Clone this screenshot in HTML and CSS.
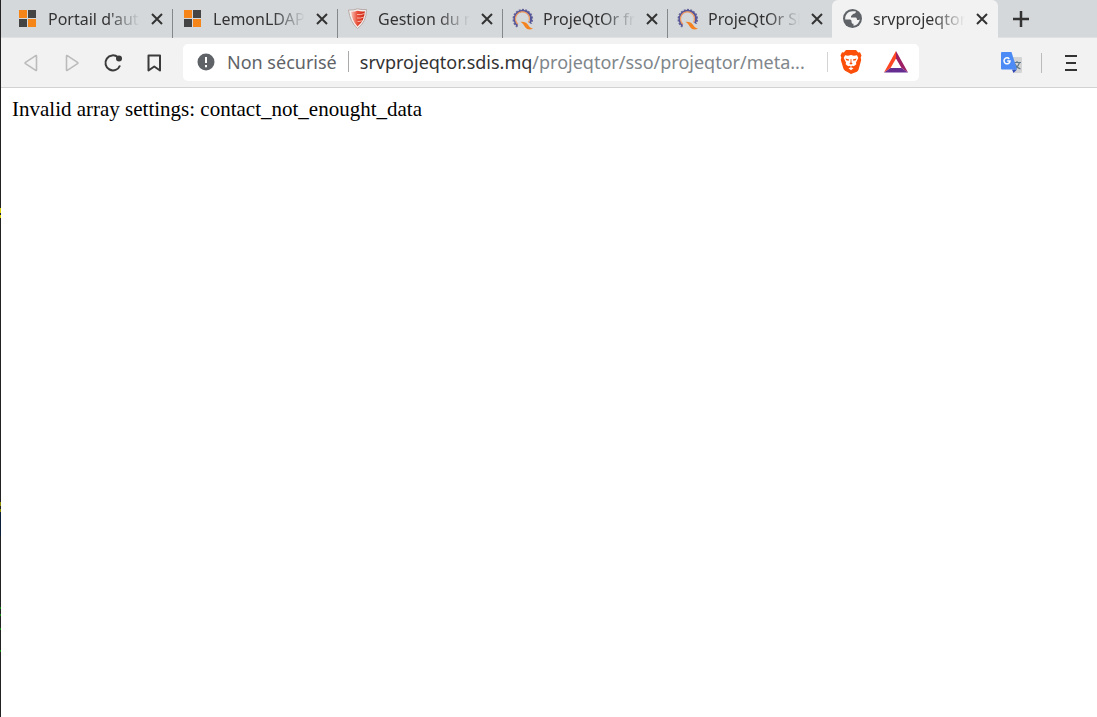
FILE: index.html
```
<!DOCTYPE html>
<html lang="fr">
<head>
    <meta charset="UTF-8">
    <meta name="viewport" content="width=device-width, initial-scale=1.0">
    <title>srvprojeqtor.sdis.mq</title>
    <link rel="stylesheet" href="styles.css">
</head>
<body>
    <!-- Shared icons -->
    <svg class="sprite" width="0" height="0" aria-hidden="true">
        <symbol id="lemon" viewBox="0 0 22 22">
            <path fill="#f58518" d="M2 2h8v8H2zM11 11h8v8h-8z" />
            <path fill="#444" d="M11 2h8v8h-8zM2 11h8v8H2z" />
        </symbol>
        <symbol id="gear-q" viewBox="0 0 22 22">
            <path d="M5.500 18.800A9.300 9.300 0 1 1 19 15.600" fill="none" stroke="#6a6a9c" stroke-width="2" stroke-dasharray="2 1.200" />
            <path d="M5.500 17.500A8.300 8.300 0 1 1 18 15.200" fill="none" stroke="#54549a" stroke-width="2" />
            <path d="M6 16.200A7 7 0 1 1 16.400 14.500" fill="none" stroke="#f09a60" stroke-width="1.200" />
            <path d="M8.500 13.800c3.500-.4 6 .7 7.500 3 1 1.800 2.500 3.200 5 4-3.500 1.200-6 .8-7.500-1.200-1.600-2.300-2.600-4.300-5-5.800z" fill="#f58220" />
        </symbol>
        <symbol id="close" viewBox="0 0 14 14">
            <path d="M2 2l10 10M12 2L2 12" stroke="#333" stroke-width="2" />
        </symbol>
    </svg>

    <div class="window">
        <nav class="tabs">
            <div class="tab">
                <svg class="favicon"><use href="#lemon" /></svg>
                <span class="title">Portail d'auth</span>
                <button class="close" aria-label="Fermer"><svg width="14" height="14"><use href="#close" /></svg></button>
            </div>
            <div class="tab">
                <svg class="favicon"><use href="#lemon" /></svg>
                <span class="title">LemonLDAP:</span>
                <button class="close" aria-label="Fermer"><svg width="14" height="14"><use href="#close" /></svg></button>
            </div>
            <div class="tab">
                <svg class="favicon" viewBox="0 0 22 22">
                    <defs>
                        <linearGradient id="shield-red">
                            <stop offset="0" stop-color="#f8c4b8" />
                            <stop offset=".45" stop-color="#e8503a" />
                            <stop offset="1" stop-color="#cc2010" />
                        </linearGradient>
                    </defs>
                    <path d="M1.500 2Q6 2.500 10.500.8 15 2 19.500 1.500 19.500 14 10.500 20.500 3 14 1.500 2z" fill="#f3f0ee" stroke="#b9aaa8" stroke-width="1" />
                    <path d="M4 3.800Q7.500 4 10.500 2.800 14 3.800 17.800 3.300 17.500 13 10.500 18.500 5 13 4 3.800z" fill="url(#shield-red)" />
                    <path d="M10 6.500q4 .6 7.500-1M10 10q3.500.6 7-1M10.500 13.500q2.500.3 5-1" fill="none" stroke="#f6b3a4" stroke-width="1" />
                </svg>
                <span class="title">Gestion du m</span>
                <button class="close" aria-label="Fermer"><svg width="14" height="14"><use href="#close" /></svg></button>
            </div>
            <div class="tab">
                <svg class="favicon"><use href="#gear-q" /></svg>
                <span class="title">ProjeQtOr fro</span>
                <button class="close" aria-label="Fermer"><svg width="14" height="14"><use href="#close" /></svg></button>
            </div>
            <div class="tab">
                <svg class="favicon"><use href="#gear-q" /></svg>
                <span class="title">ProjeQtOr SD</span>
                <button class="close" aria-label="Fermer"><svg width="14" height="14"><use href="#close" /></svg></button>
            </div>
            <div class="tab active">
                <svg class="favicon" viewBox="0 0 22 22">
                    <circle cx="10.500" cy="10.500" r="9.500" fill="#5f6368" />
                    <path d="M10.500 3.200h3.300c.2 1.600-.6 2.300-2 2.500-1.500.2-1.300 1.800-2.800 2v1.900h4.500c1.300 0 1.500 1.500 1.500 2.500h2.300l.5-1.500c.2 3.200-2.600 6.900-6.300 7.200v-2c-1.700 0-2-1.100-2-2.600 0-1.300-1.200-1.600-2.400-1.600H3.200v-1C3 6.800 6.200 3.200 10.500 3.200z" fill="#f2f2f2" />
                </svg>
                <span class="title">srvprojeqtor.</span>
                <button class="close" aria-label="Fermer"><svg width="14" height="14"><use href="#close" /></svg></button>
            </div>
            <button class="new-tab" aria-label="Nouvel onglet">
                <svg width="16" height="16" viewBox="0 0 16 16"><path d="M8 0v16M0 8h16" stroke="#333" stroke-width="2.500" /></svg>
            </button>
        </nav>

        <div class="toolbar">
            <div class="nav-buttons">
                <button aria-label="Retour" disabled>
                    <svg width="22" height="22" viewBox="0 0 22 22"><path d="M16.500 4v14q0 .8-.8.400L5.500 11.600q-.8-.6 0-1.200L15.700 3.600q.8-.4.800.4z" fill="none" stroke="#bbb" stroke-width="1.600" /></svg>
                </button>
                <button aria-label="Avancer" disabled>
                    <svg width="22" height="22" viewBox="0 0 22 22"><path d="M5.500 4v14q0 .8.800.400l10.200-6.800q.8-.6 0-1.200L6.300 3.600q-.8-.4-.8.400z" fill="none" stroke="#bbb" stroke-width="1.600" /></svg>
                </button>
                <button aria-label="Actualiser">
                    <svg width="22" height="22" viewBox="0 0 22 22">
                        <path d="M18 13.500A7.500 7.500 0 1 1 16 5.300" fill="none" stroke="#3b3b3b" stroke-width="2" />
                        <circle cx="17" cy="6.500" r="3" fill="#3b3b3b" />
                    </svg>
                </button>
                <button aria-label="Ajouter aux favoris">
                    <svg width="22" height="22" viewBox="0 0 22 22"><path d="M5.500 3.500h11.500V18.500L11.250 14.500 5.500 18.500z" fill="none" stroke="#3b3b3b" stroke-width="2" stroke-linejoin="round" /></svg>
                </button>
            </div>

            <div class="address">
                <svg class="info" width="18" height="18" viewBox="0 0 18 18">
                    <circle cx="9" cy="9" r="8.500" fill="#5f6368" />
                    <path d="M9 4v6M9 12v2.200" stroke="#fff" stroke-width="2" />
                </svg>
                <span class="security">Non sécurisé</span>
                <a class="url" href="#"><span class="host">srvprojeqtor.sdis.mq</span>/projeqtor/sso/projeqtor/meta...</a>
                <button class="shield" aria-label="Brave Shields">
                    <svg width="22" height="26" viewBox="0 0 22 26">
                        <path d="M6 1h10l2.200 2.500 1.800-.3 1.500 3.300-.8 2 .5 2.500-2.600 9.500q-.5 1.500-1.700 2.300L11 25l-5.900-3.200q-1.200-.8-1.700-2.300L.8 11l.5-2.500-.8-2L2 3.200l1.800.3z" fill="#fb4f0a" />
                        <path d="M5 6.200l3 .5L11 6l3 .7 3-.5 1.300 2.800-2.300 4.500.3 1.800-2.500 2-1.300-.6L11 17.800l-1.500-1.100-1.300.6-2.500-2 .3-1.800L3.700 9zM8.500 19.300l2.500-1.100 2.500 1.100-2.500 2z" fill="#fff" />
                        <path d="M5.500 9.600l3.700.8-.6 1.300-2.400-.5zM16.500 9.600l-3.700.8.6 1.300 2.400-.5zM10.600 10h.8l.1 3.500 1.200 1.200-1.700.9-1.700-.9 1.200-1.200z" fill="#fb4f0a" />
                    </svg>
                </button>
                <button class="rewards" aria-label="Brave Rewards">
                    <svg width="24" height="22" viewBox="0 0 24 22">
                        <path d="M12 0v7.500L6.500 17 0 21.500z" fill="#ff4724" />
                        <path d="M12 0l12 21.500-6.500-4.500L12 7.500z" fill="#9e1f63" />
                        <path d="M0 21.500L6.500 17h11l6.500 4.500z" fill="#662d91" />
                    </svg>
                </button>
            </div>

            <div class="actions">
                <button class="translate" aria-label="Google Traduction">
                    <svg width="22" height="22" viewBox="0 0 22 22">
                        <path d="M8 5h12q1 0 1 1v14q0 1-1 1h-7z" fill="#d4d4d4" />
                        <path d="M12 10.500h8M16 9v1.500M18.500 10.500q-1.500 5-5 6.500M13.500 11.500q2 4 6 5.500" fill="none" stroke="#607988" stroke-width="1.200" />
                        <path d="M11 17.500h5L12.500 21z" fill="#3049b5" />
                        <path d="M1 0h9.500L16 17.500H1q-1 0-1-1V1q0-1 1-1z" fill="#4c8bf5" />
                        <path d="M8.300 6.900A3 3 0 1 0 9 9H6.200" fill="none" stroke="#fff" stroke-width="1.500" />
                    </svg>
                </button>
                <button class="menu" aria-label="Menu">
                    <svg width="14" height="18" viewBox="0 0 14 18"><path d="M1 2h12M2 9h10M1 16h12" stroke="#333" stroke-width="2" /></svg>
                </button>
            </div>
        </div>

        <main class="page">Invalid array settings: contact_not_enought_data</main>
    </div>
</body>
</html>
```

FILE: styles.css
```
* {
    box-sizing: border-box;
}
body {
    margin: 0;
    padding-left: 1px;
    min-height: 100vh;
    /* sliver of the terminal behind the window */
    background: linear-gradient(#222 0 208px, #d8d000 208px 213px, #222 213px 215px, #d8d000 215px 218px, #222 218px 502px, #8c8c00 502px 506px, #222 506px 509px, #8c8c00 509px 512px, #0b2038 512px 536px, #222 536px 607px, #118a11 607px 609px, #222 609px 614px, #118a11 614px 616px, #222 616px 628px, #118a11 628px 630px, #222 630px 650px, #118a11 650px 652px, #222 652px);
    font-family: "Noto Sans", sans-serif;
}
.sprite {
    position: absolute;
}
.window {
    min-height: 100vh;
    background: #fff;
}
button {
    display: flex;
    align-items: center;
    justify-content: center;
    flex: none;
    margin: 0;
    padding: 0;
    border: 0;
    background: none;
}
svg {
    display: block;
    flex: none;
}

/* Tabs */
.tabs {
    display: flex;
    height: 38px;
    padding-left: 6px;
    background: #d4d8db;
    border-bottom: 1px solid #dfe2e4;
}
.tab {
    display: flex;
    align-items: center;
    flex: 0 1 165px;
    min-width: 0;
    height: 38px;
    padding: 0 8px 0 10px;
    background: linear-gradient(#85888a, #85888a) left bottom / 1px 29px no-repeat;
}
.tab:first-child {
    background: none;
}
.tab.active {
    flex-basis: 166px;
    padding-right: 9px;
    background: #f2f2f2;
    border-radius: 6px 6px 0 0;
}
.favicon {
    width: 22px;
    height: 22px;
}
.title {
    flex: 1;
    min-width: 0;
    margin: 0 10px 0 9px;
    overflow: hidden;
    white-space: nowrap;
    font-size: 16px;
    line-height: 24px;
    color: #333;
    -webkit-mask-image: linear-gradient(to right, #000 65%, transparent);
    mask-image: linear-gradient(to right, #000 65%, transparent);
}
.close {
    width: 14px;
    height: 24px;
}
.new-tab {
    width: 46px;
}

/* Toolbar */
.toolbar {
    display: flex;
    align-items: center;
    height: 50px;
    padding: 0 12px 0 15px;
    background: #f2f2f2;
    border-bottom: 1px solid #d2d2d2;
}
.nav-buttons {
    display: flex;
    gap: 11px;
    margin-right: 14px;
}
.nav-buttons button {
    width: 30px;
    height: 30px;
}
.address {
    display: flex;
    align-items: center;
    flex: 1;
    min-width: 0;
    height: 37px;
    padding: 0 11px 2px 14px;
    background: #fff;
    border-radius: 5px;
    font-size: 18px;
    line-height: 24px;
}
.security {
    flex: none;
    margin-left: 12px;
    color: #5f6368;
}
.url {
    flex: 1;
    min-width: 0;
    margin-left: 11px;
    padding: 0 12px;
    overflow: hidden;
    text-overflow: ellipsis;
    white-space: nowrap;
    text-decoration: none;
    color: #80868b;
    background: linear-gradient(#aaa, #aaa) left / 1px 21px no-repeat, linear-gradient(#d4d4d4, #d4d4d4) right / 1px 20px no-repeat;
}
.host {
    color: #333;
}
.shield {
    margin-left: 12px;
}
.rewards {
    margin-left: 22px;
}
.actions {
    display: flex;
    align-items: center;
    margin-left: 82px;
}
.menu {
    width: 44px;
    height: 20px;
    margin-left: 18px;
    padding-left: 14px;
    border-left: 1px solid #bbb;
}

/* Page */
.page {
    padding: 9px 11px;
    font-family: "Liberation Serif", serif;
    font-size: 21px;
    line-height: 24px;
    color: #000;
}
```
